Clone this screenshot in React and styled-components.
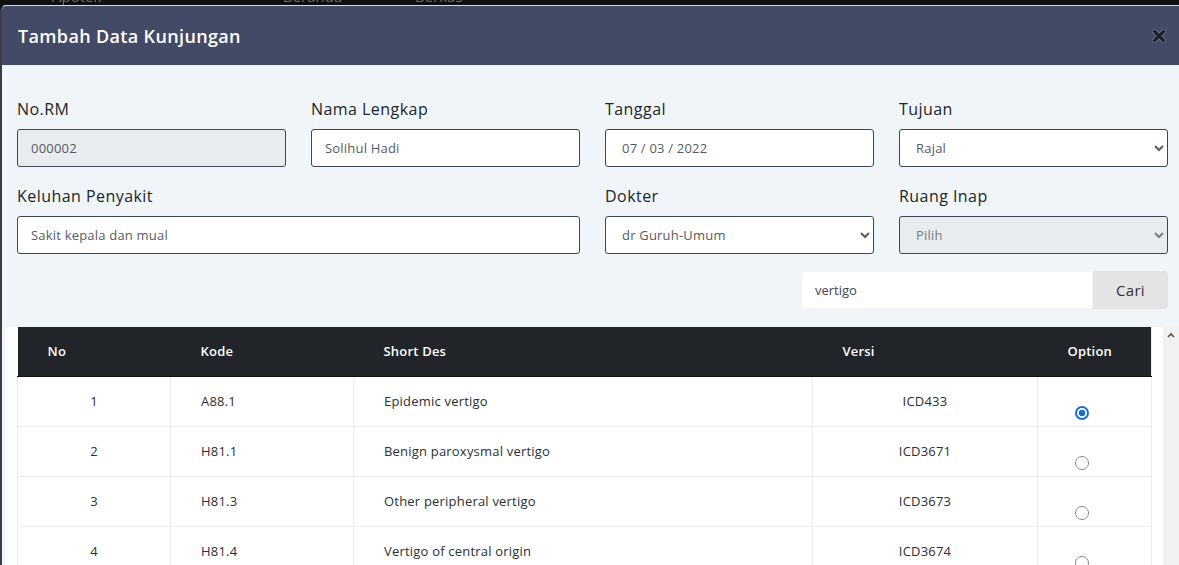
import styled, {createGlobalStyle} from "styled-components"

const GlobalStyle = createGlobalStyle`
	html, body {
		margin: 0;
		padding: 0;
		height: 565px;
		overflow: hidden;
		background: #0f1012;
		font-family: "Open Sans", "Liberation Sans", sans-serif;
	}
	* {
		box-sizing: border-box;
	}
`

const Backdrop = styled.div`
	height: 5px;
	overflow: hidden;
	display: flex;
	padding-left: 52px;
`

const NavItem = styled.span`
	width: ${(p) => p.w}px;
	flex-shrink: 0;
	margin-top: -11px;
	font-size: 15px;
	line-height: 15px;
	color: #6b6d72;
	filter: blur(0.4px);
`

const Modal = styled.div`
	width: 100%;
	border-top: 1px solid #d9dce6;
	border-left: 2px solid #3b3d44;
	border-top-left-radius: 6px;
	background: #f0f5f9;
	overflow: hidden;
`

const Header = styled.div`
	height: 59px;
	background: #434a66;
	display: flex;
	align-items: center;
	justify-content: space-between;
	padding: 0 12px 0 16px;
`

const Title = styled.h5`
	margin: 0;
	font-size: 18px;
	font-weight: 600;
	color: #ffffff;
	letter-spacing: 0.35px;
`

const CloseButton = styled.button`
	border: none;
	background: transparent;
	padding: 0;
	width: 16px;
	height: 16px;
	display: flex;
	align-items: center;
	justify-content: center;
	cursor: pointer;
`

const Body = styled.div`
	padding: 32px 11px 0 15px;
`

const FormGrid = styled.div`
	display: grid;
	grid-template-columns: repeat(4, 1fr);
	column-gap: 25px;
	row-gap: 17px;
`

const Field = styled.div`
	display: flex;
	flex-direction: column;
	grid-column: span ${(p) => p.span || 1};
`

const Label = styled.label`
	font-size: 16px;
	line-height: 24px;
	color: #212529;
	margin-bottom: 8px;
	letter-spacing: 0.45px;
`

const Input = styled.input`
	height: 38px;
	border: 1px solid #3f4555;
	border-radius: 3px;
	background: ${(p) => (p.disabled ? "#e9ecef" : "#ffffff")};
	padding: 0 0 0 ${(p) => p.pl || 13}px;
	font-family: inherit;
	font-size: 13px;
	color: #555b63;
	outline: none;
	letter-spacing: 0.2px;
`

const Select = styled.select`
	height: 38px;
	border: 1px solid #3f4555;
	border-radius: 3px;
	background: ${(p) => (p.disabled ? "#e9ecef" : "#ffffff")};
	padding: 0 8px 0 12px;
	font-family: inherit;
	font-size: 13px;
	color: ${(p) => (p.disabled ? "#777c84" : "#555b63")};
	outline: none;
	opacity: 1;
	letter-spacing: 0.2px;
`

const SearchRow = styled.div`
	display: flex;
	justify-content: flex-end;
	margin-top: 17px;
`

const SearchInput = styled.input`
	width: 292px;
	height: 38px;
	border: 1px solid #f3f5f7;
	border-radius: 4px 0 0 4px;
	background: #ffffff;
	padding: 0 13px;
	font-family: inherit;
	font-size: 13px;
	color: #444;
	outline: none;
`

const SearchButton = styled.button`
	width: 75px;
	height: 38px;
	border: none;
	border-radius: 0 4px 4px 0;
	background: #e4e4e4;
	font-family: inherit;
	font-size: 15px;
	color: #333;
	letter-spacing: 0.3px;
`

const ScrollArea = styled.div`
	display: flex;
	margin: 18px -11px 0 -12px;
	height: 240px;
`

const ScrollContent = styled.div`
	flex: 1;
	background: #ffffff;
	padding: 0 12px;
	overflow: hidden;
`

const ScrollTrack = styled.div`
	width: 16px;
	background: #f1f1f1;
	display: flex;
	justify-content: center;
	padding-top: 5px;
`

const Table = styled.table`
	width: 100%;
	border-collapse: collapse;
	table-layout: fixed;
	font-size: 13px;
	border-right: 1px solid #ececec;
`

const Th = styled.th`
	height: 49px;
	background: #212529;
	color: #ffffff;
	font-weight: 600;
	text-align: left;
	padding: 0 30px;
	letter-spacing: 0.2px;
	border-bottom: 1px solid #111;
`

const Td = styled.td`
	height: 50px;
	padding: ${(p) => (p.radio ? "29px 0 0 37px" : "0 30px")};
	vertical-align: ${(p) => (p.radio ? "top" : "middle")};
	text-align: ${(p) => (p.center ? "center" : "left")};
	color: #2b2f33;
	border: 1px solid #ececec;
	border-top: none;
	letter-spacing: 0.2px;
`

const Radio = styled.span`
	display: block;
	width: 14px;
	height: 14px;
	border-radius: 50%;
	border: ${(p) => (p.checked ? "2px solid #1a6ed8" : "1.6px solid #8a8a8a")};
	background: ${(p) => (p.checked ? "radial-gradient(circle, #1a6ed8 0 3px, #ffffff 3.6px)" : "#ffffff")};
`

const rows = [
	{no: 1, kode: "A88.1", des: "Epidemic vertigo", versi: "ICD433", checked: true},
	{no: 2, kode: "H81.1", des: "Benign paroxysmal vertigo", versi: "ICD3671"},
	{no: 3, kode: "H81.3", des: "Other peripheral vertigo", versi: "ICD3673"},
	{no: 4, kode: "H81.4", des: "Vertigo of central origin", versi: "ICD3674"},
	{no: 5, kode: "H81.8", des: "Other disorders of vestibular function", versi: "ICD3675"},
]

export default function App() {
	return (
		<>
			<GlobalStyle />
			<Backdrop>
				<NavItem w={231}>Apotek</NavItem>
				<NavItem w={132}>Beranda</NavItem>
				<NavItem w={100}>Berkas</NavItem>
			</Backdrop>
			<Modal>
				<Header>
					<Title>Tambah Data Kunjungan</Title>
					<CloseButton aria-label="Close">
						<svg width="14" height="14" viewBox="0 0 14 14">
							<path d="M2.5 2.5 L11.5 11.5 M11.5 2.5 L2.5 11.5" stroke="#7a809a" strokeWidth="4.6" strokeLinecap="square" />
							<path d="M2.5 2.5 L11.5 11.5 M11.5 2.5 L2.5 11.5" stroke="#1c1f2e" strokeWidth="3.2" strokeLinecap="square" />
						</svg>
					</CloseButton>
				</Header>
				<Body>
					<FormGrid>
						<Field>
							<Label>No.RM</Label>
							<Input value="000002" disabled readOnly />
						</Field>
						<Field>
							<Label>Nama Lengkap</Label>
							<Input defaultValue="Solihul Hadi" />
						</Field>
						<Field>
							<Label>Tanggal</Label>
							<Input defaultValue="07 / 03 / 2022" pl={16} />
						</Field>
						<Field>
							<Label>Tujuan</Label>
							<Select defaultValue="Rajal">
								<option>Rajal</option>
								<option>Ranap</option>
							</Select>
						</Field>
						<Field span={2}>
							<Label>Keluhan Penyakit</Label>
							<Input defaultValue="Sakit kepala dan mual" />
						</Field>
						<Field>
							<Label>Dokter</Label>
							<Select defaultValue="dr Guruh-Umum">
								<option>dr Guruh-Umum</option>
							</Select>
						</Field>
						<Field>
							<Label>Ruang Inap</Label>
							<Select disabled defaultValue="Pilih">
								<option>Pilih</option>
							</Select>
						</Field>
					</FormGrid>
					<SearchRow>
						<SearchInput defaultValue="vertigo" />
						<SearchButton>Cari</SearchButton>
					</SearchRow>
					<ScrollArea>
						<ScrollContent>
							<Table>
								<colgroup>
									<col style={{width: 153}} />
									<col style={{width: 183}} />
									<col style={{width: 459}} />
									<col style={{width: 225}} />
									<col style={{width: 114}} />
								</colgroup>
								<thead>
									<tr>
										<Th>No</Th>
										<Th>Kode</Th>
										<Th>Short Des</Th>
										<Th>Versi</Th>
										<Th>Option</Th>
									</tr>
								</thead>
								<tbody>
									{rows.map((r) => (
										<tr key={r.no}>
											<Td center>{r.no}</Td>
											<Td>{r.kode}</Td>
											<Td>{r.des}</Td>
											<Td center>{r.versi}</Td>
											<Td radio>
												<Radio checked={r.checked} />
											</Td>
										</tr>
									))}
								</tbody>
							</Table>
						</ScrollContent>
						<ScrollTrack>
							<svg width="8" height="6" viewBox="0 0 8 6">
								<path d="M1 5 L4 2 L7 5" stroke="#505050" strokeWidth="1.6" fill="none" />
							</svg>
						</ScrollTrack>
					</ScrollArea>
				</Body>
			</Modal>
		</>
	)
}
